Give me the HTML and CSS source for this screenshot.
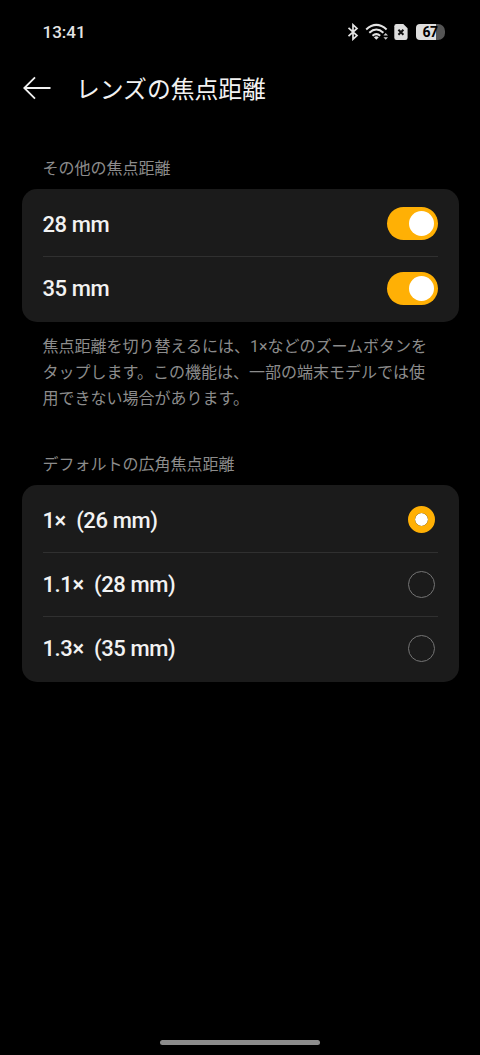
FILE: index.html
```html
<!DOCTYPE html>
<html lang="ja">
<head>
<meta charset="utf-8">
<title>レンズの焦点距離</title>
<link rel="stylesheet" href="styles.css">
</head>
<body>
<div class="screen">
  <div class="status">
    <span class="time">13:41</span>
    <div class="status-icons">
      <svg class="bluetooth" width="12" height="18" viewBox="0 0 12 18"><path d="M1.5 4.8 10 12.6 6 16.2V1.8L10 5.4 1.5 13.2" fill="none" stroke="#e4e4e4" stroke-width="1.7"/></svg>
      <svg class="wifi" width="24" height="18" viewBox="0 0 24 18">
        <g fill="none" stroke="#e4e4e4" stroke-width="2"><path d="M1.2 6.4Q11.3-2.6 21.6 6.4"/><path d="M4.3 9.7Q11.3 3.4 18.4 9.7"/><path d="M7.5 12.8Q11.3 9.4 15.2 12.8"/></g>
        <path d="M8.9 14.2Q11.3 12.3 13.8 14.2L11.3 16.8Z" fill="#e4e4e4"/>
        <path d="M18.4 12.6 20.7 10 23 12.6ZM18.4 14.2H23L20.7 16.8Z" fill="#c8c8c8"/>
      </svg>
      <svg class="sim" width="14" height="16" viewBox="0 0 14 16"><path d="M2.5 0H9.3L13.6 4.3V13.7Q13.6 16 11.3 16H2.5Q.3 16 .3 13.7V2.3Q.3 0 2.5 0Z" fill="#dedede"/><path d="M4.4 5.8 9.4 10.8M9.4 5.8 4.4 10.8" stroke="#111" stroke-width="2"/></svg>
      <div class="battery">67</div>
    </div>
  </div>
  <header class="header">
    <svg width="28" height="24" viewBox="0 0 28 24"><path d="M12 1.3 1.3 12 12 22.7M1.5 12H27.5" fill="none" stroke="#f2f2f2" stroke-width="1.8"/></svg>
    <h1 class="title">レンズの焦点距離</h1>
  </header>
  <main class="content">
    <h2 class="label">その他の焦点距離</h2>
    <section class="card">
      <div class="row"><span class="name">28 mm</span><span class="switch"></span></div>
      <div class="row"><span class="name">35 mm</span><span class="switch"></span></div>
    </section>
    <p class="note">焦点距離を切り替えるには、1×などのズームボタンを<br>タップします。この機能は、一部の端末モデルでは使<br>用できない場合があります。</p>
    <h2 class="label">デフォルトの広角焦点距離</h2>
    <section class="card">
      <div class="row"><span class="name">1×&nbsp; (26 mm)</span><span class="radio selected"></span></div>
      <div class="row"><span class="name">1.1×&nbsp; (28 mm)</span><span class="radio"></span></div>
      <div class="row"><span class="name">1.3×&nbsp; (35 mm)</span><span class="radio"></span></div>
    </section>
  </main>
  <div class="home-bar"></div>
</div>
</body>
</html>
```
FILE: styles.css
```css
* { box-sizing: border-box; }
body { margin: 0; background: #000; }
.screen {
  height: 1055px;
  display: flex;
  flex-direction: column;
  background: #000;
  color: #f2f2f2;
  font-family: Roboto, "Noto Sans CJK JP", sans-serif;
}
.status {
  height: 64px;
  flex: none;
  display: flex;
  align-items: center;
  justify-content: space-between;
  padding: 0 35px 0 42.5px;
}
.time { font-size: 17px; font-weight: 500; color: #e4e4e4; }
.status-icons { display: flex; align-items: center; }
.wifi { margin-left: 6px; }
.sim { margin-left: 5px; }
.battery {
  width: 29px;
  height: 16px;
  margin-left: 8px;
  padding-right: 1px;
  border-radius: 4px 7px 7px 4px;
  background: linear-gradient(to right, #dedede 70%, #555 70%);
  color: #000;
  font: 700 14px/17px Roboto, sans-serif;
  letter-spacing: -0.5px;
  text-align: center;
}
.header {
  height: 48px;
  flex: none;
  display: flex;
  align-items: center;
  gap: 25px;
  padding-left: 23px;
}
.title { margin: 0; padding-top: 3px; font-size: 23.8px; font-weight: 400; line-height: 36px; white-space: nowrap; }
.content { padding: 44px 21.5px 0; flex: 1; }
.label {
  margin: 0;
  padding-left: 21px;
  font-size: 16px;
  font-weight: 400;
  line-height: 26px;
  color: #8c8c8c;
}
.card {
  margin-top: 7px;
  padding: 2.5px 21px;
  border-radius: 15px;
  background: #1b1b1b;
}
.row {
  height: 64px;
  display: flex;
  align-items: center;
  justify-content: space-between;
  font-size: 22px;
  font-weight: 500;
  letter-spacing: -0.38px;
}
.row + .row { border-top: 1px solid #303030; }
.row:first-child .name { padding-top: 2px; }
.switch {
  width: 51px;
  height: 33px;
  padding: 4px;
  border-radius: 17px;
  background: #ffb005;
}
.switch::after {
  content: "";
  display: block;
  width: 25px;
  height: 25px;
  margin-left: auto;
  border-radius: 50%;
  background: #fff;
}
.radio {
  width: 27px;
  height: 27px;
  margin-right: 3px;
  border: 1.5px solid #747474;
  border-radius: 50%;
}
.radio.selected { border: 7.5px solid #ffb005; background: #fff; background-clip: padding-box; }
.note {
  margin: 12px 0 40px;
  padding-left: 21px;
  font-size: 16px;
  line-height: 26px;
  color: #8c8c8c;
  white-space: nowrap;
}
.home-bar {
  width: 160px;
  height: 5px;
  flex: none;
  margin: 0 auto 10px;
  border-radius: 3px;
  background: #8c8c8c;
}
```
